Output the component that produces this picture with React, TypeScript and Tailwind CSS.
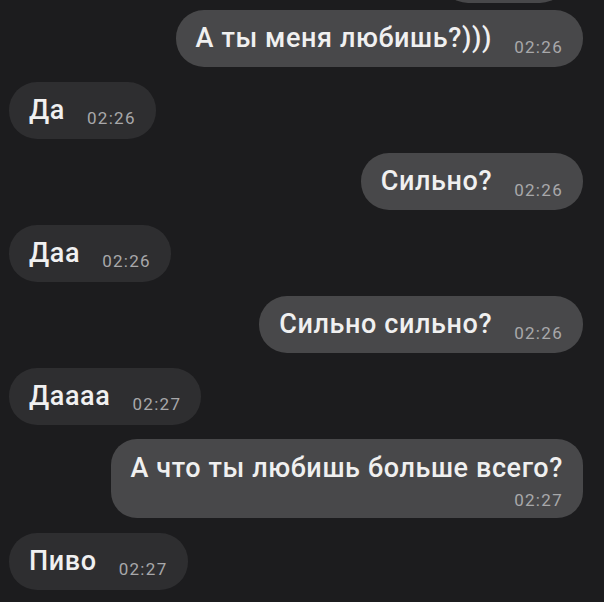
import React from "react";

type Msg = { text: string; time: string; out: boolean; two?: boolean };

const msgs: Msg[] = [
  { text: "А ты меня любишь?)))", time: "02:26", out: true },
  { text: "Да", time: "02:26", out: false },
  { text: "Сильно?", time: "02:26", out: true },
  { text: "Даа", time: "02:26", out: false },
  { text: "Сильно сильно?", time: "02:26", out: true },
  { text: "Даааа", time: "02:27", out: false },
  { text: "А что ты любишь больше всего?", time: "02:27", out: true, two: true },
  { text: "Пиво", time: "02:27", out: false },
];

function Bubble({ m }: { m: Msg }) {
  const bg = m.out ? "bg-[#48484a]" : "bg-[#2e2e30]";
  if (m.two) {
    return (
      <div className={`flex flex-col items-end ${bg} rounded-[26px] h-[79px] pl-[20px] pr-[20px] pt-[16px]`}>
        <span className="text-[27px] font-medium leading-none text-[#f0f0f0] tracking-[0.6px]">{m.text}</span>
        <span className="text-[17px] leading-none text-[#a8a8aa] mt-[10px] tracking-[1.3px]">{m.time}</span>
      </div>
    );
  }
  return (
    <div className={`flex items-center ${bg} rounded-[28px] h-[57px] pl-[20px] pr-[20px]`}>
      <span className="text-[27px] font-medium leading-none text-[#f0f0f0] tracking-[0.6px]">{m.text}</span>
      <span className="text-[17px] leading-none text-[#a8a8aa] ml-[22px] mt-[17px] tracking-[1.3px]">{m.time}</span>
    </div>
  );
}

export default function App() {
  return (
    <div
      className="w-[604px] h-[602px] overflow-hidden bg-[#1c1c1e] relative"
      style={{ fontFamily: "Roboto, 'Noto Sans', sans-serif" }}
    >
      <div className="flex flex-col mt-[-54px]">
        <div className="flex justify-end pr-[36px] mb-[7px]">
          <div className="w-[128px] h-[57px] rounded-[28px] bg-[#48484a]" />
        </div>
        <div className="flex flex-col gap-[14.5px]">
          {msgs.map((m, i) => (
            <div key={i} className={`flex ${m.out ? "justify-end pr-[21px]" : "justify-start pl-[9px]"}`}>
              <Bubble m={m} />
            </div>
          ))}
        </div>
      </div>
    </div>
  );
}
